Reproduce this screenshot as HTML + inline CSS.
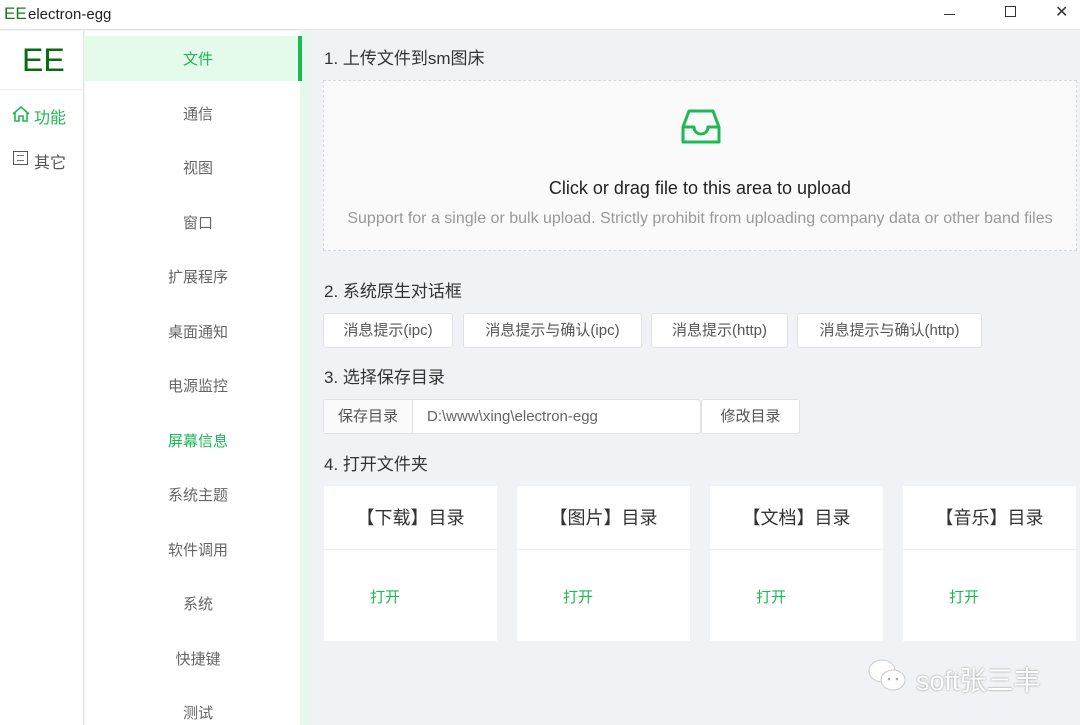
<!DOCTYPE html>
<html><head><meta charset="utf-8"><style>
*{margin:0;padding:0;box-sizing:border-box}
body{width:1080px;height:725px;overflow:hidden;background:#f0f2f5;font-family:"Liberation Sans","Noto Sans CJK SC",sans-serif;position:relative;color:#333}
.abs{position:absolute}
.title{left:0;top:0;width:1080px;height:30px;background:#fff;border-bottom:1px solid #e5e5e5}
.btn{position:absolute;background:#fff;border:1px solid #e2e2e2;border-radius:3px;font-size:15px;color:#555;text-align:center;line-height:33px;height:35px}
.menu div{position:absolute;left:85px;width:226px;text-align:center;font-size:15px;color:#666}
.card{position:absolute;top:486px;width:173px;height:155px;background:#fff}
.card .h{height:64px;border-bottom:1px solid #eee;text-align:center;line-height:64px;font-size:18px;color:#333}
.card .o{padding:36px 0 0 46px;font-size:15px;color:#1db954}
h3{position:absolute;left:324px;font-size:17px;font-weight:normal;color:#333}
</style></head><body>
<div class="abs title">
<span class="abs" style="left:4px;top:4px;font-size:17px;color:#1a7a1a">EE</span>
<span class="abs" style="left:28px;top:6px;font-size:15px;color:#222">electron-egg</span>
<span class="abs" style="left:944px;top:14px;width:11px;height:1px;background:#333"></span>
<span class="abs" style="left:1005px;top:6px;width:11px;height:11px;border:1px solid #333"></span>
<span class="abs" style="left:1055px;top:2px;font-size:16px;color:#333">✕</span>
</div>
<div class="abs" style="left:0;top:31px;width:84px;height:694px;background:#fff;border-right:1px solid #e8e8e8"></div>
<div class="abs" style="left:0;top:89px;width:84px;height:1px;background:#eee"></div>
<div class="abs" style="left:22px;top:42px;font-size:32px;color:#0b6b12">EE</div>
<svg class="abs" style="left:12px;top:106px" width="18" height="16" viewBox="0 0 18 16"><path d="M1 8L9 1l8 7M3 6.5V15h4v-5h4v5h4V6.5" fill="none" stroke="#1db954" stroke-width="1.6"/></svg>
<div class="abs" style="left:34px;top:104px;font-size:16px;color:#1db954">功能</div>
<div class="abs" style="left:13px;top:151px;width:15px;height:14px;border:1.5px solid #555"></div>
<div class="abs" style="left:17px;top:155px;width:7px;height:6px;border-top:1px solid #777;border-bottom:1px solid #777"></div>
<div class="abs" style="left:34px;top:149px;font-size:16px;color:#555">其它</div>
<div class="abs" style="left:85px;top:31px;width:215px;height:694px;background:#fff"></div>
<div class="abs" style="left:300px;top:31px;width:11px;height:694px;background:#e6f8ee"></div>
<div class="abs" style="left:85px;top:36px;width:215px;height:45px;background:#e4fbeb"></div>
<div class="abs" style="left:298px;top:36px;width:4px;height:45px;background:#1db954"></div>
<div class="menu">
<div style="top:48px;color:#1db954">文件</div>
<div style="top:103px">通信</div>
<div style="top:157px">视图</div>
<div style="top:212px">窗口</div>
<div style="top:266px">扩展程序</div>
<div style="top:321px">桌面通知</div>
<div style="top:375px">电源监控</div>
<div style="top:430px;color:#1db954">屏幕信息</div>
<div style="top:484px">系统主题</div>
<div style="top:539px">软件调用</div>
<div style="top:593px">系统</div>
<div style="top:648px">快捷键</div>
<div style="top:702px">测试</div>
</div>
<h3 style="top:44px">1. 上传文件到sm图床</h3>
<div class="abs" style="left:323px;top:80px;width:754px;height:171px;background:#fafafa;border:1px dashed #d9d9d9"></div>
<svg class="abs" style="left:680px;top:107px" width="42" height="40" viewBox="0 0 42 40"><path d="M3 20L9 4h24l6 16v15H3z M3 20h11c0 4 3 7 7 7s7-3 7-7h11" fill="none" stroke="#1db954" stroke-width="3" stroke-linejoin="round"/></svg>
<div class="abs" style="left:323px;top:178px;width:754px;text-align:center;font-size:18px;color:#222">Click or drag file to this area to upload</div>
<div class="abs" style="left:323px;top:210px;width:754px;text-align:center;font-size:16px;color:#999">Support for a single or bulk upload. Strictly prohibit from uploading company data or other band files</div>
<h3 style="top:277px">2. 系统原生对话框</h3>
<div class="btn" style="left:323px;top:313px;width:130px">消息提示(ipc)</div>
<div class="btn" style="left:463px;top:313px;width:179px">消息提示与确认(ipc)</div>
<div class="btn" style="left:651px;top:313px;width:137px">消息提示(http)</div>
<div class="btn" style="left:797px;top:313px;width:185px">消息提示与确认(http)</div>
<h3 style="top:363px">3. 选择保存目录</h3>
<div class="btn" style="left:323px;top:399px;width:378px;border-radius:3px"></div>
<div class="abs" style="left:324px;top:400px;width:89px;height:33px;background:#fafafa;border-right:1px solid #e2e2e2;font-size:15px;color:#555;text-align:center;line-height:33px">保存目录</div>
<div class="abs" style="left:427px;top:400px;font-size:15px;color:#666;line-height:33px">D:\www\xing\electron-egg</div>
<div class="btn" style="left:701px;top:399px;width:99px">修改目录</div>
<h3 style="top:450px">4. 打开文件夹</h3>
<div class="card" style="left:324px"><div class="h">【下载】目录</div><div class="o">打开</div></div>
<div class="card" style="left:517px"><div class="h">【图片】目录</div><div class="o">打开</div></div>
<div class="card" style="left:710px"><div class="h">【文档】目录</div><div class="o">打开</div></div>
<div class="card" style="left:903px"><div class="h">【音乐】目录</div><div class="o">打开</div></div>
<svg class="abs" style="left:866px;top:656px" width="44" height="40" viewBox="0 0 44 40"><ellipse cx="16" cy="15" rx="13" ry="11" fill="#fff" stroke="#ccc"/><ellipse cx="27" cy="24" rx="12" ry="10" fill="#fff" stroke="#ccc"/><circle cx="23" cy="23" r="1.3" fill="#aaa"/><circle cx="31" cy="23" r="1.3" fill="#aaa"/></svg>
<div class="abs" style="left:916px;top:659px;font-size:27px;color:#fff;text-shadow:0 0 2px #888">soft张三丰</div>
</body></html>
